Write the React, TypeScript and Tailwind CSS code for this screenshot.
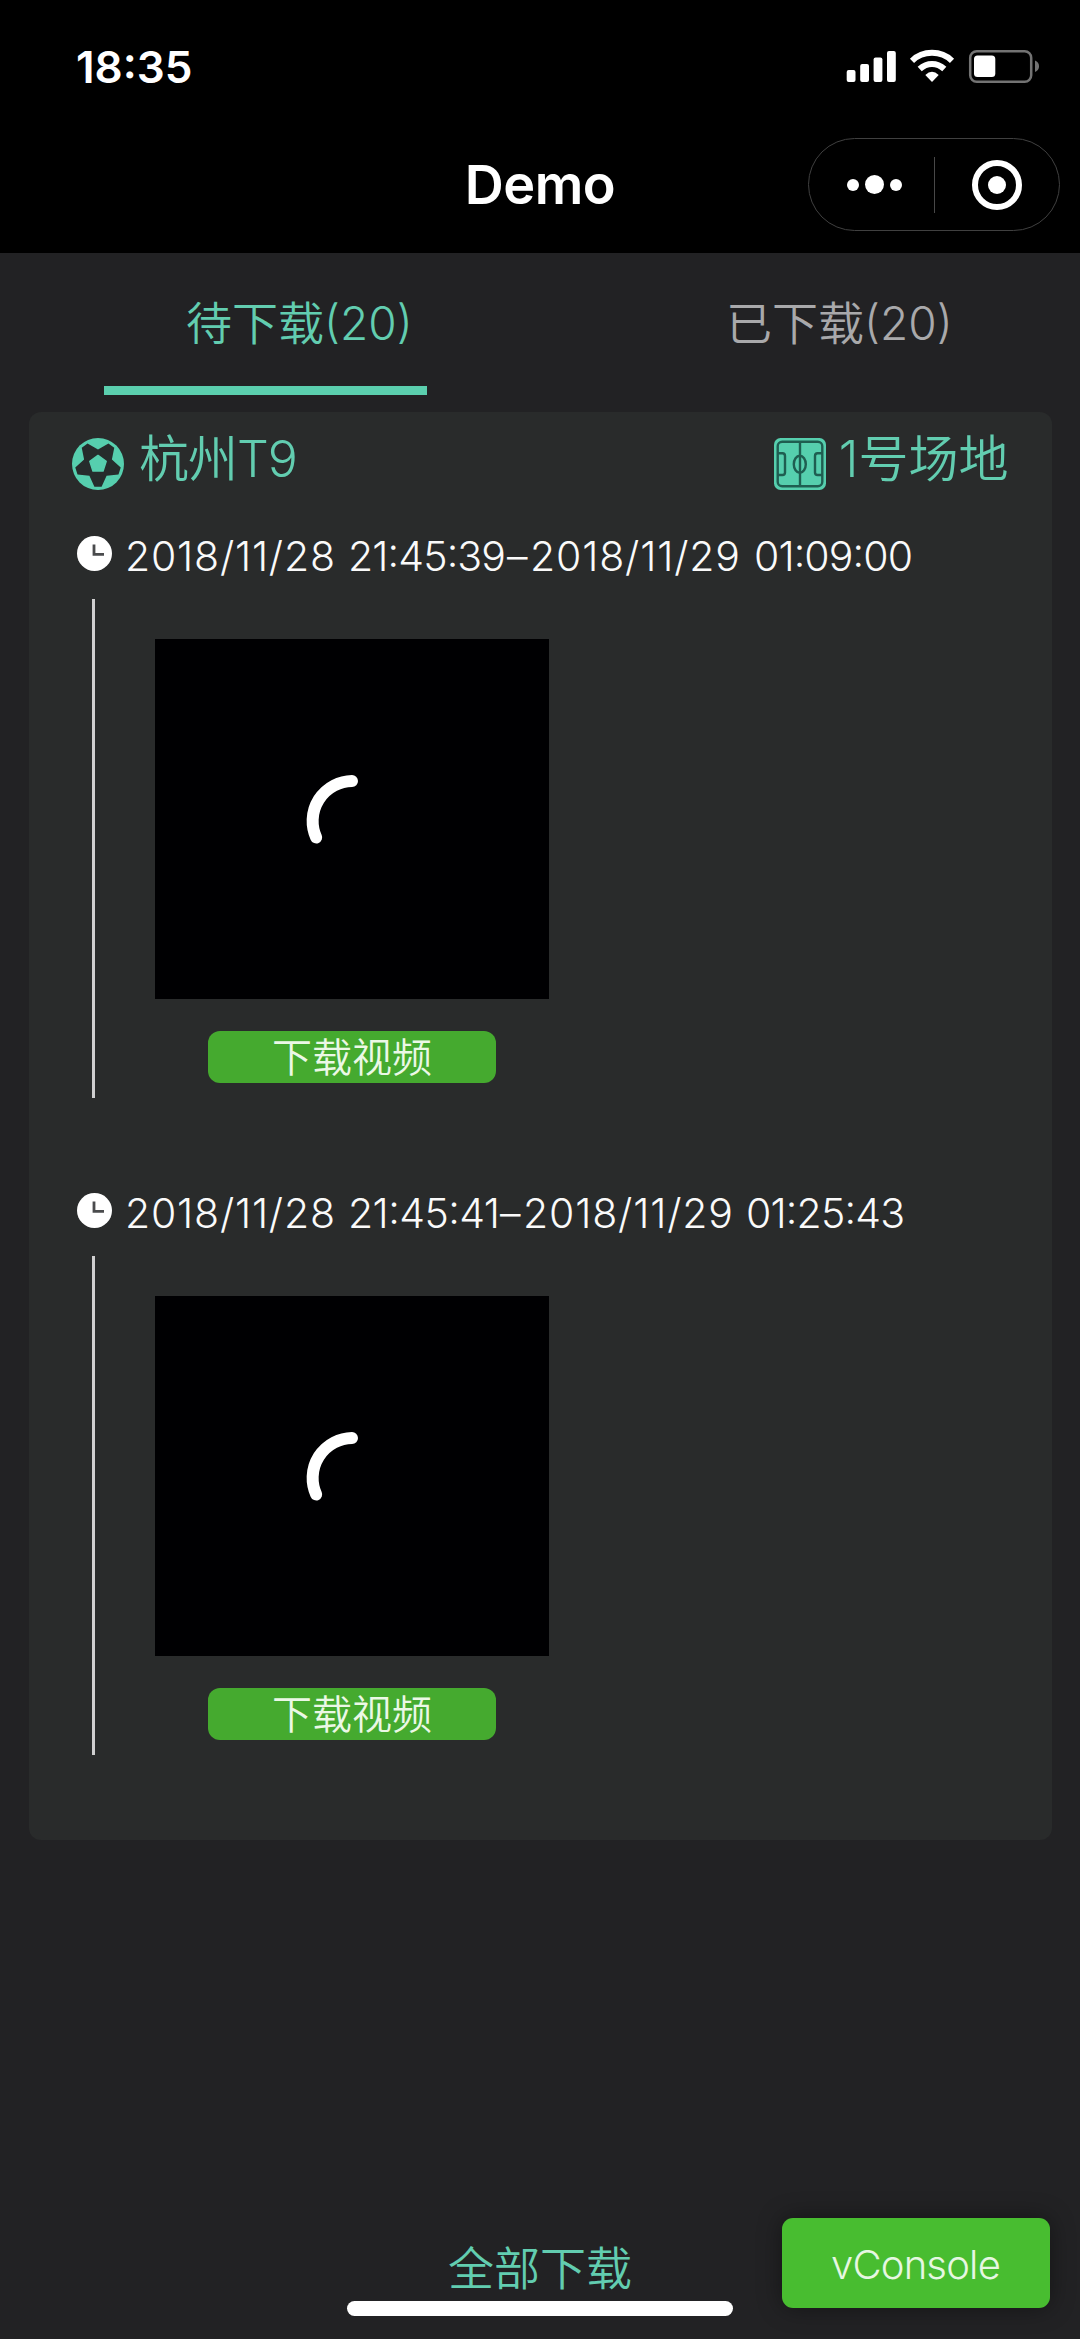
import React from "react";

type Segment = { text: string; x: number; length: number };

const clips: { id: number; segments: Segment[] }[] = [
  {
    id: 1,
    segments: [
      { text: "2018/11/28", x: 0, length: 210 },
      { text: "21:45:39", x: 223, length: 158 },
      { text: "–", x: 382, length: 22 },
      { text: "2018/11/29", x: 405, length: 210 },
      { text: "01:09:00", x: 629, length: 159 },
    ],
  },
  {
    id: 2,
    segments: [
      { text: "2018/11/28", x: 0, length: 210 },
      { text: "21:45:41", x: 223, length: 152 },
      { text: "–", x: 375, length: 22 },
      { text: "2018/11/29", x: 398, length: 210 },
      { text: "01:25:43", x: 621, length: 159 },
    ],
  },
];

function polar(cx: number, cy: number, r: number, deg: number) {
  const a = (deg * Math.PI) / 180;
  return `${(cx + r * Math.cos(a)).toFixed(2)},${(cy + r * Math.sin(a)).toFixed(2)}`;
}

const star = [0, 1, 2, 3, 4]
  .map((i) => `${polar(26, 26, 14.6, -90 + i * 72)} ${polar(26, 26, 23, -63 + i * 72)} ${polar(26, 26, 23, -45 + i * 72)}`)
  .join(" ");
const pentagon = [0, 1, 2, 3, 4].map((i) => polar(26, 26, 8.6, -90 + i * 72)).join(" ");

function BallIcon() {
  return (
    <svg width="52" height="52" viewBox="0 0 52 52">
      <circle cx="26" cy="26" r="26" fill="#56cfae" />
      <polygon points={star} fill="#262c2c" />
      <polygon points={pentagon} fill="#56cfae" stroke="#56cfae" strokeWidth="1.5" strokeLinejoin="round" />
    </svg>
  );
}

function FieldIcon() {
  return (
    <svg width="52" height="52" viewBox="0 0 52 52" fill="none" stroke="#1f5e51" strokeWidth="2.4">
      <rect x="0" y="0" width="52" height="52" rx="6.5" fill="#56cfae" stroke="none" />
      <rect x="3.7" y="3.7" width="44.6" height="44.6" rx="4.5" />
      <path d="M26 4V48" />
      <ellipse cx="25.8" cy="26.3" rx="6" ry="8.5" />
      <path d="M4 15.3H8.5Q11 15.3 11 18V34.5Q11 37 8.5 37H4M48 15.3H43.5Q41 15.3 41 18V34.5Q41 37 43.5 37H48" />
    </svg>
  );
}

function ClockIcon() {
  return (
    <svg width="35" height="35" viewBox="0 0 35 35">
      <circle cx="17.5" cy="17.5" r="17.5" fill="#fff" />
      <path d="M17 8.5V18.3H27" fill="none" stroke="#4a4b4d" strokeWidth="2.8" />
    </svg>
  );
}

function StatusIcons() {
  return (
    <svg width="194" height="36" viewBox="846 49 194 36">
      <g fill="#fff">
        <rect x="846.7" y="70" width="8.8" height="12" rx="2" />
        <rect x="860.2" y="64" width="8.8" height="18" rx="2" />
        <rect x="873.6" y="57.5" width="8.8" height="24.5" rx="2" />
        <rect x="887" y="51" width="8.8" height="31" rx="2" />
        <path d="M932 82L925.3 75Q932 68.7 938.7 75Z" />
      </g>
      <path d="M912 60.8C923 50.2 941 50.2 952 60.8" fill="none" stroke="#fff" strokeWidth="6" />
      <path d="M919.7 69C927 62.2 937 62.2 944.3 69" fill="none" stroke="#fff" strokeWidth="6" />
      <rect x="970.2" y="51.2" width="61" height="30.6" rx="6.5" fill="none" stroke="#737373" strokeWidth="2.5" />
      <rect x="974" y="55.5" width="21.3" height="21.5" rx="3.5" fill="#fff" />
      <path d="M1035 60.5Q1039 62 1039 66.3T1035 72Z" fill="#737373" />
    </svg>
  );
}

function Clip({ segments }: { segments: Segment[] }) {
  return (
    <section className="h-[657px]">
      <div className="flex h-[35px] items-center">
        <ClockIcon />
        <svg className="ml-[13px] h-[52px] w-[790px] shrink-0 overflow-visible">
          <text y="42.5" fill="#fafafa" fontSize="41" fontWeight="350">
            {segments.map((s) => (
              <tspan key={s.x} x={s.x} textLength={s.length} lengthAdjust="spacing">
                {s.text}
              </tspan>
            ))}
          </text>
        </svg>
      </div>
      <div className="mt-[28px] ml-[15px] flex h-[499px] border-l-[3px] border-[#cfcfd0] pl-[60px]">
        <div className="flex w-[394px] flex-col items-center pt-[40px]">
          <div className="h-[360px] w-[394px] bg-[#000002]">
            <svg width="394" height="360" viewBox="0 0 394 360" fill="none">
              <path d="M197 142A40 40 0 0 0 161.2 198.5" stroke="#fff" strokeWidth="12" strokeLinecap="round" />
            </svg>
          </div>
          <button className="mt-[32px] h-[52px] w-[288px] rounded-[12px] bg-[#45aa2f] text-[40px] leading-[54px] font-[350] text-[#ebf8e6]">
            下载视频
          </button>
        </div>
      </div>
    </section>
  );
}

export default function App() {
  return (
    <div className="flex h-[2339px] w-[1080px] flex-col overflow-hidden bg-[#222224] font-[Inter,'Noto_Sans_CJK_SC',sans-serif]">
      <header className="h-[253px] bg-black text-white">
        <div className="flex h-[138px] justify-between pr-[40px] pl-[76px]">
          <span className="pt-[41px] text-[44px] leading-[53px] font-semibold">18:35</span>
          <div className="pt-[49px]">
            <StatusIcons />
          </div>
        </div>
        <div className="grid h-[93px] grid-cols-[1fr_auto_1fr] items-center pr-[20px]">
          <span />
          <h1 className="ml-[20px] text-[54px] leading-[60px] font-semibold tracking-[-0.5px]">Demo</h1>
          <div className="flex h-[93px] w-[252px] items-center justify-self-end rounded-full border border-[#404040]">
            <div className="flex h-full w-[125px] items-center justify-center gap-[6px] pl-[5px]">
              <i className="size-[12px] rounded-full bg-white" />
              <i className="size-[19px] rounded-full bg-white" />
              <i className="size-[12px] rounded-full bg-white" />
            </div>
            <div className="h-[56px] w-px bg-[#484848]" />
            <div className="ml-[37px] flex size-[50px] items-center justify-center rounded-full border-[6px] border-white">
              <i className="size-[18px] rounded-full bg-white" />
            </div>
          </div>
        </div>
      </header>

      <nav className="flex h-[159px] text-[46px] leading-[60px] font-[350]">
        <div className="ml-[104px] flex h-[142px] w-[323px] flex-col border-b-[9px] border-[#5bcfae] pt-[40px] pl-[82px] whitespace-nowrap text-[#62cdb0]">
          待下载(20)
        </div>
        <div className="ml-[299px] pt-[40px] whitespace-nowrap text-[#a9a9ab]">已下载(20)</div>
      </nav>

      <main className="mx-[28.5px] h-[1428px] rounded-[12px] bg-[#292b2b]">
        <div className="flex h-[124px] justify-between pr-[43px] pl-[43.5px] text-[50px] leading-[60px] font-[350] text-[#62cdb0]">
          <div className="flex pt-[26px]">
            <BallIcon />
            <span className="-mt-[9px] ml-[15px] tracking-[-1px]">杭州T9</span>
          </div>
          <div className="flex pt-[26px]">
            <FieldIcon />
            <span className="-mt-[9px] ml-[13px]">1号场地</span>
          </div>
        </div>
        <div className="pl-[48.5px]">
          {clips.map((c) => (
            <Clip key={c.id} segments={c.segments} />
          ))}
        </div>
      </main>

      <footer className="relative flex flex-1 flex-col items-center">
        <div className="mt-[398px] text-[46px] leading-[60px] font-[350] text-[#62cdb0]">全部下载</div>
        <div className="mt-[3px] h-[15px] w-[386px] rounded-full bg-white" />
        <button className="absolute top-[378px] left-[781.5px] h-[90px] w-[268px] rounded-[11px] bg-[#48bd30] pt-[3px] text-[40px] font-[350] tracking-[-0.8px] text-[#e6f7e2] shadow-[0_0_24px_rgba(0,0,0,0.4)]">
          vConsole
        </button>
      </footer>
    </div>
  );
}
